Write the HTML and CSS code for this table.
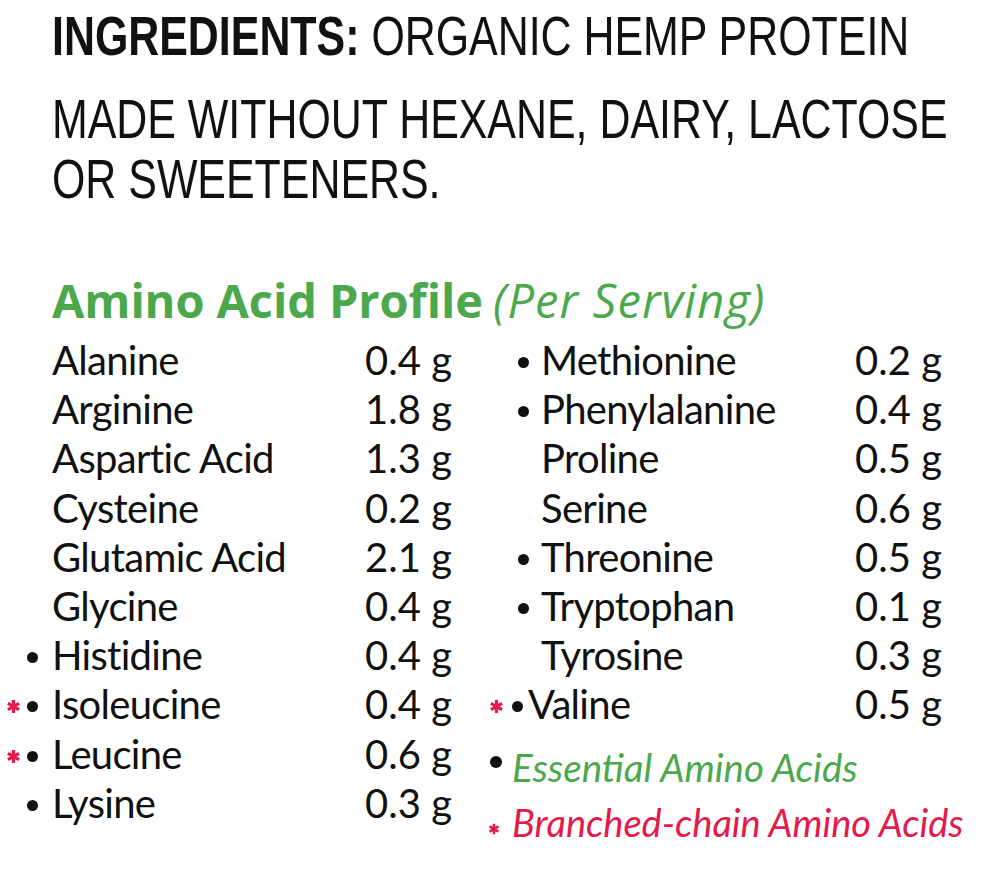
FILE: index.html
```html
<!DOCTYPE html>
<html>
<head>
<meta charset="utf-8">
<link rel="stylesheet" href="styles.css">
</head>
<body>
<div class="page">
  <section class="ingredients">
    <p class="line first"><b>INGREDIENTS:</b> ORGANIC HEMP PROTEIN</p>
    <p class="line">MADE WITHOUT HEXANE, DAIRY, LACTOSE</p>
    <p class="line">OR SWEETENERS.</p>
  </section>

  <h2 class="profile-title">Amino Acid Profile <span class="per">(Per Serving)</span></h2>

  <div class="amino">
    <div class="col left">
      <div class="row"><span class="mk"></span><span class="nm">Alanine</span><span class="val">0.4 g</span></div>
      <div class="row"><span class="mk"></span><span class="nm">Arginine</span><span class="val">1.8 g</span></div>
      <div class="row"><span class="mk"></span><span class="nm">Aspartic Acid</span><span class="val">1.3 g</span></div>
      <div class="row"><span class="mk"></span><span class="nm">Cysteine</span><span class="val">0.2 g</span></div>
      <div class="row"><span class="mk"></span><span class="nm">Glutamic Acid</span><span class="val">2.1 g</span></div>
      <div class="row"><span class="mk"></span><span class="nm">Glycine</span><span class="val">0.4 g</span></div>
      <div class="row"><span class="mk"><span class="dot"></span></span><span class="nm">Histidine</span><span class="val">0.4 g</span></div>
      <div class="row"><span class="mk"><svg class="ast" viewBox="0 0 14 14"><path d="M7 1V13M1.8 4L12.2 10M1.8 10L12.2 4"/></svg><span class="dot"></span></span><span class="nm">Isoleucine</span><span class="val">0.4 g</span></div>
      <div class="row"><span class="mk"><svg class="ast" viewBox="0 0 14 14"><path d="M7 1V13M1.8 4L12.2 10M1.8 10L12.2 4"/></svg><span class="dot"></span></span><span class="nm">Leucine</span><span class="val">0.6 g</span></div>
      <div class="row"><span class="mk"><span class="dot"></span></span><span class="nm">Lysine</span><span class="val">0.3 g</span></div>
    </div>
    <div class="col right">
      <div class="row"><span class="mk"><span class="dot"></span></span><span class="nm">Methionine</span><span class="val">0.2 g</span></div>
      <div class="row"><span class="mk"><span class="dot"></span></span><span class="nm">Phenylalanine</span><span class="val">0.4 g</span></div>
      <div class="row"><span class="mk"></span><span class="nm">Proline</span><span class="val">0.5 g</span></div>
      <div class="row"><span class="mk"></span><span class="nm">Serine</span><span class="val">0.6 g</span></div>
      <div class="row"><span class="mk"><span class="dot"></span></span><span class="nm">Threonine</span><span class="val">0.5 g</span></div>
      <div class="row"><span class="mk"><span class="dot"></span></span><span class="nm">Tryptophan</span><span class="val">0.1 g</span></div>
      <div class="row"><span class="mk"></span><span class="nm">Tyrosine</span><span class="val">0.3 g</span></div>
      <div class="row valine-row"><span class="mk"><svg class="ast" viewBox="0 0 14 14"><path d="M7 1V13M1.8 4L12.2 10M1.8 10L12.2 4"/></svg><span class="dot"></span></span><span class="nm">Valine</span><span class="val">0.5 g</span></div>
      <div class="legend">
        <p class="leg essential"><span class="lmk"><span class="dot"></span></span><i>Essential Amino Acids</i></p>
        <p class="leg branched"><span class="lmk"><svg class="ast small" viewBox="0 0 14 14"><path d="M7 1V13M1.8 4L12.2 10M1.8 10L12.2 4"/></svg></span><i>Branched-chain Amino Acids</i></p>
      </div>
    </div>
  </div>
</div>
</body>
</html>
```

FILE: styles.css
```css
html, body {
  margin: 0;
  padding: 0;
  background: #ffffff;
}

.page {
  width: 1000px;
  height: 879px;
  overflow: hidden;
  color: #111111;
}

/* ---------- ingredients ---------- */
.ingredients {
  padding: 6px 0 0 52px;
  font-family: "Liberation Sans", Arial, sans-serif;
  font-size: 55px;
  color: #111;
}

.line {
  margin: 0;
  height: 60px;
  line-height: 60px;
  white-space: nowrap;
  transform: scaleX(0.78);
  transform-origin: left center;
}

.line.first {
  margin-bottom: 23px;
}

.line b {
  font-weight: 700;
}

/* ---------- title ---------- */
.profile-title {
  margin: 66px 0 0 52px;
  height: 50px;
  font-family: "Open Sans", sans-serif;
  font-weight: 700;
  font-size: 47px;
  line-height: 50px;
  letter-spacing: -0.1px;
  color: #4ca84c;
  white-space: nowrap;
}

.profile-title .per {
  margin-left: -2px;
  font-family: "Open Sans", sans-serif;
  font-weight: 400;
  font-style: italic;
  font-size: 47px;
  letter-spacing: 1.1px;
}

/* ---------- table ---------- */
.amino {
  margin-top: 11px;
  display: grid;
  grid-template-columns: 452px 462px;
  column-gap: 28px;
  font-family: Lato, sans-serif;
  font-size: 40px;
  color: #111;
}

.row {
  display: grid;
  grid-template-columns: 52px 1fr auto;
  height: 49.2px;
  line-height: 49.2px;
  white-space: nowrap;
}

.right .row {
  grid-template-columns: 61px 1fr auto;
}

.mk {
  display: flex;
  justify-content: flex-end;
  align-items: center;
  gap: 6px;
  padding-right: 14px;
  padding-top: 4px;
}

.right .mk {
  padding-right: 12px;
}

.nm {
  letter-spacing: -0.7px;
}

.val {
  text-align: right;
}

.dot {
  display: inline-block;
  flex: none;
  width: 11px;
  height: 11px;
  border-radius: 50%;
  background: #111;
}

.ast {
  flex: none;
  width: 15px;
  height: 15px;
  fill: none;
  stroke: #e5194a;
  stroke-width: 3;
  stroke-linecap: butt;
}

.valine-row .mk {
  gap: 8px;
  padding-right: 18px;
}

.valine-row .nm {
  margin-left: -13px;
}

/* ---------- legend ---------- */
.legend {
  padding-top: 10px;
}

.leg {
  display: flex;
  align-items: center;
  margin: 0;
  height: 55px;
  line-height: 55px;
  font-family: Lato, sans-serif;
  font-size: 38.5px;
  white-space: nowrap;
}

.branched {
  font-size: 38px;
}

.lmk {
  flex: none;
  display: flex;
  align-items: center;
  width: 32px;
  padding-left: 10px;
  box-sizing: border-box;
}

.essential .lmk {
  padding-bottom: 10px;
}

.essential .dot {
  width: 12px;
  height: 12px;
}

.branched .lmk {
  padding-left: 8px;
  padding-top: 14px;
}

.ast.small {
  width: 12px;
  height: 12px;
}

.essential i {
  color: #4ca84c;
}

.branched i {
  color: #e5194a;
}
```
